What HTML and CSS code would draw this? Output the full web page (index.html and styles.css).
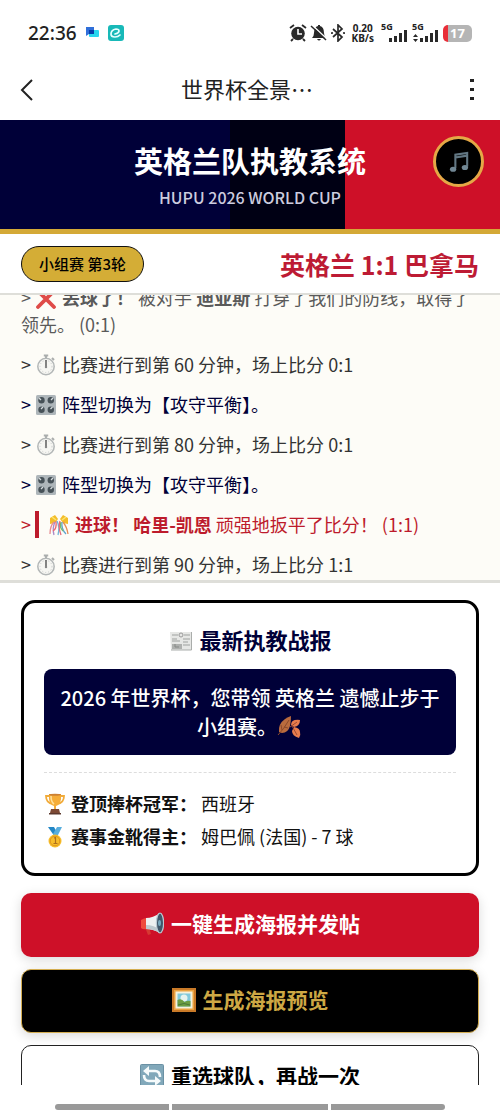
FILE: index.html
```html
<!DOCTYPE html>
<html lang="zh-CN">
<head>
<meta charset="utf-8">
<meta name="viewport" content="width=device-width, initial-scale=1">
<title>世界杯全景</title>
<link rel="stylesheet" href="styles.css">
</head>
<body>
<svg class="sprite" aria-hidden="true">
  <symbol id="stopwatch" viewBox="0 0 22 22">
    <path d="M11 1v3M8.800 1.500h4.400M17 4l2 2" stroke="#aaadad" stroke-width="2" fill="none"/>
    <circle cx="11" cy="12.500" r="8.200" fill="#f6f6f2" stroke="#b3b7b7" stroke-width="1.500"/>
    <circle cx="11" cy="12.500" r="6" fill="none" stroke="#c8caca" stroke-width="1" stroke-dasharray="1 2"/>
    <path d="M11 6v8" stroke="#444" stroke-width="1.300"/><circle cx="11" cy="13" r="1.200" fill="#888"/>
  </symbol>
  <symbol id="knobs" viewBox="0 0 22 22">
    <rect x="1" y="1" width="20" height="20" rx="1.500" fill="#aeb6ba"/>
    <g fill="#465157"><circle cx="6.500" cy="6.300" r="3.200"/><circle cx="15.800" cy="6.300" r="3.200"/><circle cx="6.500" cy="15.700" r="3.200"/><circle cx="15.800" cy="15.700" r="3.200"/></g>
    <path d="M6 6L4 4M16 6l2-2M6 15l2-2M15.500 15l2-2" stroke="#d5dbde" stroke-width="1.300"/>
  </symbol>
  <symbol id="cross" viewBox="0 0 22 22"><path d="M3 3L19 19M19 3L3 19" transform="translate(0 1)" stroke="#df4b48" stroke-width="3.800" stroke-linecap="round"/></symbol>
  <symbol id="confetti" viewBox="0 0 22 22">
    <path d="M2 4L7 1l3 4-3 4-5 1zM20 4l-5-3-3 4 3 4 5 1z" fill="#f3bd29"/>
    <path d="M4 3l4 3M18 3l-4 3" stroke="#fbe36f" stroke-width="1.500"/>
    <g fill="none" stroke-width="1.300"><path d="M6 8q-4 4-4 12" stroke="#e78b91"/><path d="M7 8q-3 6-1 13" stroke="#a98ac9"/><path d="M8 7q1 8-3 10" stroke="#ec6971"/><path d="M9 7q3 6 1 14" stroke="#70b5d9"/><path d="M15 8q4 5 5 12" stroke="#e78b55"/><path d="M14 8q-1 7 4 12" stroke="#5ea4cd"/><path d="M13 8q-2 5 2 9" stroke="#78ba67"/><path d="M12 7q-2 6 1 14" stroke="#e86878"/></g>
  </symbol>
  <symbol id="newspaper" viewBox="0 0 24 22">
    <path d="M1 2h22v18H2z" fill="#e6e7e5"/><path d="M22.500 2v18H2" fill="none" stroke="#aaadab"/>
    <path d="M3 5h6M15 5h6M3 9h5M3 11h8M14 9h7M14 12h5M14 15h7" stroke="#9ea19f" stroke-width="1"/>
    <circle cx="12" cy="5" r="2" fill="none" stroke="#999"/><path d="M3 14h10v5H3z" fill="#aeb0ae"/><path d="M6 14v3h4" stroke="#858885" fill="none"/>
  </symbol>
  <symbol id="leaves" viewBox="0 0 24 24">
    <path d="M2 17Q1 9 8 4q3-2 6-3 0 5-1 10-2 7-8 7z" fill="#b96b3e"/><path d="M1 20q6-6 11-15M5 15l-1-5M7 12l4 1" stroke="#8b482b" fill="none"/>
    <path d="M14 10q0-6 9-5 0 6-6 7zM17 12q6 1 6 5 1 3-1 6-7-2-7-7z" fill="#e77c4d"/><path d="M13 12l7-5M15 11l5 9" stroke="#9f4b32" fill="none"/>
  </symbol>
  <symbol id="trophy" viewBox="0 0 22 22">
    <path d="M6 3H2q0 7 7 8M16 3h4q0 7-7 8" fill="none" stroke="#f1ab3a" stroke-width="1.800"/>
    <path d="M5 1h12q1 10-5 12v4h-2v-4Q4 11 5 1z" fill="#f6ad38"/><path d="M7 3q0 6 3 8" stroke="#ffe09a" stroke-width="1.600" fill="none"/><ellipse cx="11" cy="1.800" rx="6" ry="1" fill="#cd8133"/><path d="M7 16h8l1 4H6z" fill="#7c4934"/><path d="M5 20h12v1.500H5z" fill="#5c392d"/>
  </symbol>
  <symbol id="medal" viewBox="0 0 22 22">
    <path d="M4 1h6l4 7-3 3z" fill="#2387c6"/><path d="M13 1h5l-5 10-4-3z" fill="#58aede"/><circle cx="11" cy="15" r="6.500" fill="#f7bd2b"/><circle cx="11" cy="15" r="4.800" fill="none" stroke="#de961c"/><path d="M10 12l1.500-.500v6M9.500 17.500h4" stroke="#ad701d" fill="none" stroke-width="1.200"/>
  </symbol>
  <symbol id="megaphone" viewBox="0 0 24 24">
    <path d="M5 15h4l2 7-3 1z" fill="#d63932"/><path d="M1 8q3-2 6-2v11q-4 1-6-1z" fill="#ef4b3d"/><path d="M6 6q7 0 14-5v20q-7-4-14-4z" fill="#edf1f1"/><path d="M6 13q8 0 14 5v3q-7-4-14-4z" fill="#bdc9ce"/><ellipse cx="20" cy="11" rx="3.600" ry="10" fill="#40576a" stroke="#bacbd4" stroke-width="1.200"/><ellipse cx="19.500" cy="11" rx="1.500" ry="3" fill="#77a8bd"/>
  </symbol>
  <symbol id="picture" viewBox="0 0 24 24">
    <path d="M0 0h24v24H0z" fill="#c97a28"/><path d="M2 2h20v20H2z" fill="#eca240"/><path d="M3.500 3.500h17v17h-17z" fill="#f5f2dd"/><path d="M5.500 5.500h13v13h-13z" fill="#81c9dc"/><circle cx="12" cy="10" r="3.500" fill="#e6f3ef"/><path d="M5.500 12q4-2 7 2 3-2 6-1v5.500h-13z" fill="#6c9e43"/><path d="M6 17q6-3 12 0" stroke="#49763a" fill="none"/>
  </symbol>
  <symbol id="refresh" viewBox="0 0 24 24">
    <rect x=".5" y=".5" width="23" height="23" rx="1" fill="#81a8ba" stroke="#6b91a4"/>
    <path d="M7 7h8q5 0 5 6M17 17H9q-5 0-5-6" fill="none" stroke="#f5fafb" stroke-width="2.600"/><path d="M9 2v10L3 7zM15 12v10l6-5z" fill="#f5fafb"/>
  </symbol>
  <symbol id="signal" viewBox="0 0 20 12"><path d="M0 8h3v4H0zM5 6h3v6H5zM10 3h3v9h-3zM15 0h3v12h-3z" fill="#292929"/></symbol>
</svg>

<div class="status">
  <div class="status-left">
    <time>22:36</time>
    <svg width="14" height="12" viewBox="0 0 14 12"><rect x="4" y="3" width="10" height="7" rx="1" fill="#28d5ee"/><path d="M1 0h8v7H4l-3 2z" fill="#306fd9"/><path d="M4 3h5v4H4z" fill="#063daa"/></svg>
    <svg width="18" height="18" viewBox="0 0 18 18"><rect x="1" y="1" width="16" height="16" rx="3" fill="#18b9b8"/><path d="M8 10q4-1 4-3 0-2-3-2-5 1-5 5 0 3 4 3 3 0 5-2" fill="none" stroke="#e7ffff" stroke-width="1.700" stroke-linecap="round"/></svg>
  </div>
  <div class="status-right">
    <svg width="18" height="18" viewBox="0 0 18 18"><circle cx="9" cy="9.500" r="6.800" fill="#292929"/><path d="M1 4l4-3M17 4l-4-3M4 15l-2 2M14 15l2 2" stroke="#292929" stroke-width="1.800"/><path d="M9 5v5h4" stroke="#fff" stroke-width="1.600" fill="none"/></svg>
    <svg width="18" height="18" viewBox="0 0 18 18"><path d="M2 14q2-2 2-5 0-6 4-7V1h2v1q4 1 4 7 0 3 2 5zM7 15h4q-2 3-4 0z" fill="#292929"/><path d="M1 0l16 15" stroke="#fff" stroke-width="1.500"/><path d="M1 2l15 14" stroke="#292929" stroke-width="1.500"/></svg>
    <svg width="14" height="18" viewBox="0 0 14 18"><path d="M2 5l9 8-4 4V1l4 4-9 8" fill="none" stroke="#292929" stroke-width="1.700"/><circle cx="1" cy="9" r="1.100" fill="#292929"/><circle cx="13" cy="9" r="1.100" fill="#292929"/></svg>
    <div class="speed"><span>0.20</span><span>KB/s</span></div>
    <div class="cell"><span>5G</span><svg width="20" height="12"><use href="#signal"/></svg></div>
    <div class="cell"><span>5G</span><div class="cell-data"><svg width="5" height="8" viewBox="0 0 5 8"><path d="M0 3l2.500-3L5 3zM0 5h5L2.500 8z" fill="#292929"/></svg><svg width="20" height="12"><use href="#signal"/></svg></div></div>
    <div class="battery">17</div>
  </div>
</div>

<nav class="topbar">
  <button class="icon-button" type="button" aria-label="返回"><svg width="14" height="22" viewBox="0 0 14 22"><path d="M12 1L2 11l10 10" fill="none" stroke="#222" stroke-width="2"/></svg></button>
  <span class="page-name">世界杯全景…</span>
  <button class="icon-button more" type="button" aria-label="更多"><svg width="4" height="24" viewBox="0 0 4 24"><path d="M0 1h4v3H0zM0 10h4v3H0zM0 19h4v3H0z" fill="#222"/></svg></button>
</nav>

<header class="hero">
  <h1>英格兰队执教系统</h1>
  <p>HUPU 2026 WORLD CUP</p>
  <button class="music" type="button" aria-label="音乐"><svg width="20" height="24" viewBox="0 0 22 24"><path d="M7 19V4l13-2v15M7 7l13-2" fill="none" stroke="#627783" stroke-width="2.300"/><ellipse cx="4.500" cy="20" rx="3.500" ry="2.800" fill="#718794"/><ellipse cx="17.500" cy="18" rx="3.500" ry="2.800" fill="#718794"/></svg></button>
</header>

<section class="scorebar">
  <span class="round">小组赛 第3轮</span>
  <strong class="score">英格兰 1:1 巴拿马</strong>
</section>

<section class="log">
  <p class="loss">&gt; <svg class="emoji"><use href="#cross"/></svg> <b>丢球了！</b> 被对手 <b>迪亚斯</b> 打穿了我们的防线，取得了领先。 (0:1)</p>
  <p>&gt; <svg class="emoji"><use href="#stopwatch"/></svg> 比赛进行到第 60 分钟，场上比分 0:1</p>
  <p class="tactic">&gt; <svg class="emoji"><use href="#knobs"/></svg> 阵型切换为【攻守平衡】。</p>
  <p>&gt; <svg class="emoji"><use href="#stopwatch"/></svg> 比赛进行到第 80 分钟，场上比分 0:1</p>
  <p class="tactic">&gt; <svg class="emoji"><use href="#knobs"/></svg> 阵型切换为【攻守平衡】。</p>
  <p class="goal">&gt; <span><svg class="emoji"><use href="#confetti"/></svg> <b>进球！ 哈里-凯恩</b> 顽强地扳平了比分！ (1:1)</span></p>
  <p>&gt; <svg class="emoji"><use href="#stopwatch"/></svg> 比赛进行到第 90 分钟，场上比分 1:1</p>
</section>

<main class="content">
  <article class="report">
    <h2><svg class="emoji-large"><use href="#newspaper"/></svg> 最新执教战报</h2>
    <p class="verdict">2026 年世界杯，您带领 英格兰 遗憾止步于小组赛。<svg class="emoji-large"><use href="#leaves"/></svg></p>
    <div class="awards">
      <p><svg class="emoji"><use href="#trophy"/></svg> <b>登顶捧杯冠军：</b> 西班牙</p>
      <p><svg class="emoji"><use href="#medal"/></svg> <b>赛事金靴得主：</b> 姆巴佩 (法国) - 7 球</p>
    </div>
  </article>
  <button class="action publish" type="button"><svg class="emoji-large"><use href="#megaphone"/></svg> 一键生成海报并发帖</button>
  <button class="action preview" type="button"><svg class="emoji-large"><use href="#picture"/></svg> 生成海报预览</button>
  <button class="action restart" type="button"><svg class="emoji-large"><use href="#refresh"/></svg> 重选球队，再战一次</button>
</main>
<div class="system-bar"><i></i><i></i><i></i></div>
</body>
</html>
```

FILE: styles.css
```css
* { box-sizing: border-box; }
body {
  margin: 0;
  height: 100vh;
  display: flex;
  flex-direction: column;
  overflow: hidden;
  background: #fff;
  color: #222;
  font-family: "Noto Sans CJK SC", sans-serif;
}
h1, h2, p { margin: 0; }
button { font-family: inherit; cursor: pointer; }
.sprite { position: absolute; width: 0; height: 0; }
.status {
  flex: none;
  height: 60px;
  padding: 6px 28px 0;
  display: flex;
  justify-content: space-between;
  align-items: center;
}
.status-left, .status-right { display: flex; align-items: center; }
.status-left { gap: 8px; }
.status-left time { font: 500 19px/24px "Noto Sans", sans-serif; }
.status-right { gap: 3px; font: 700 10px/10px "Noto Sans", sans-serif; }
.speed { display: flex; flex-direction: column; align-items: center; margin: 0 4px; }
.cell { display: flex; flex-direction: column; width: 28px; height: 18px; font-size: 9px; line-height: 6px; }
.cell > svg, .cell-data { align-self: flex-end; }
.cell-data { display: flex; align-items: flex-end; gap: 2px; }
.battery {
  width: 29px;
  height: 17px;
  border-radius: 5px;
  background: linear-gradient(90deg, #e82e38 18%, #b5b5b5 18%);
  color: #fff;
  font-size: 13px;
  line-height: 17px;
  text-align: center;
}
.topbar {
  flex: none;
  height: 60px;
  padding: 0 20px;
  display: grid;
  grid-template-columns: 54px 1fr 60px;
  align-items: center;
}
.icon-button { border: 0; padding: 0; background: none; height: 40px; display: flex; align-items: center; }
.more { justify-content: flex-end; padding-right: 6px; }
.page-name { padding-bottom: 4px; text-align: center; font-size: 22px; line-height: 32px; }
.hero {
  flex: none;
  position: relative;
  padding: 22px 20px 19px;
  border-bottom: 5px solid #d4a936;
  background: linear-gradient(90deg, #000038 46%, #000014 46% 69%, #ce1028 69%);
  color: #fff;
  text-align: center;
}
.hero h1 { font-size: 29px; line-height: 36px; }
.hero p { margin-top: 7px; color: #ccccdf; font-size: 16px; line-height: 25px; font-weight: 500; }
.music {
  position: absolute;
  top: 16px;
  right: 16px;
  width: 51px;
  height: 51px;
  border: 3px solid #e5a846;
  border-radius: 50%;
  padding: 0;
  background: #000;
  display: grid;
  place-items: center;
}
.scorebar {
  flex: none;
  height: 59px;
  padding: 0 21px;
  display: flex;
  align-items: center;
  justify-content: space-between;
}
.round {
  padding: 0 17px;
  border: 1px solid #111;
  border-radius: 18px;
  background: #d4ad36;
  color: #000;
  font-size: 15px;
  line-height: 34px;
  font-weight: 500;
}
.score { color: #bd1b34; font-size: 25px; line-height: 36px; }
.log {
  flex: none;
  height: 290px;
  padding: 0 21px 2px;
  border-top: 2px solid #deded9;
  border-bottom: 3px solid #deded9;
  overflow: hidden;
  display: flex;
  flex-direction: column;
  justify-content: flex-end;
  gap: 13px;
  background: #fdfcf7;
  color: #333;
  font-size: 18px;
  line-height: 27px;
}
.log p { flex: none; }
.log .loss { color: #5a5a5a; }
.log .tactic { color: #000038; }
.log .goal { display: flex; gap: 4px; color: #bd1b2c; }
.goal span { border-left: 4px solid #bd1b2c; padding-left: 9px; }
.emoji { width: 22px; height: 22px; margin-right: 1px; vertical-align: -4px; }
.emoji-large { width: 24px; height: 24px; margin-right: 2px; vertical-align: -4px; }
.content {
  flex: 1;
  min-height: 0;
  padding: 17px 21px 0;
  display: flex;
  flex-direction: column;
  gap: 12px;
  overflow: hidden;
}
.report { flex: none; margin-bottom: 5px; padding: 18px 20px 20px; border: 3px solid #000; border-radius: 14px; }
.report h2 { color: #000038; text-align: center; font-size: 22px; line-height: 36px; }
.verdict {
  margin-top: 12px;
  padding: 14px 16px;
  border-radius: 8px;
  background: #000038;
  color: #fff;
  text-align: center;
  font-size: 20px;
  line-height: 29px;
  font-weight: 500;
}
.awards {
  margin-top: 17px;
  padding-top: 14px;
  border-top: 1px dashed #ddd;
  color: #111;
  font-size: 18px;
  line-height: 33px;
}
.action {
  flex: none;
  height: 64px;
  border: 0;
  border-radius: 10px;
  padding: 0 6px 4px;
  font-size: 21px;
  line-height: 32px;
  font-weight: 700;
  box-shadow: 0 3px 12px rgba(0, 0, 0, .15);
}
.publish { background: #ce1028; color: #fff; }
.preview { border: 1px solid #d4ad50; background: #000; color: #cda844; }
.restart { border: 1px solid #222; background: #fff; color: #000; box-shadow: none; }
.system-bar {
  flex: none;
  height: 26px;
  padding: 0 11% 1px;
  display: grid;
  grid-template-columns: 114fr 157fr 114fr;
  gap: 3px;
  align-items: end;
}
.system-bar i { height: 6px; background: #999; }
.system-bar i:first-child { border-radius: 3px 0 0 3px; }
.system-bar i:last-child { border-radius: 0 3px 3px 0; }
```
